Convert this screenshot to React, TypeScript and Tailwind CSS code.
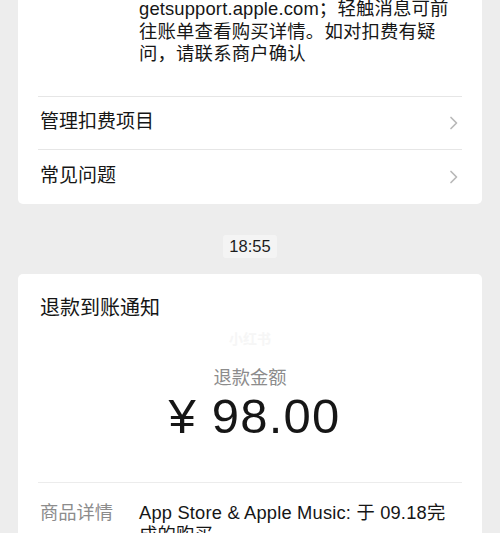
import React from 'react';

const font = { fontFamily: '"Liberation Sans", "Noto Sans CJK SC", sans-serif' };

const Chevron = () => (
  <svg width="10" height="16" viewBox="0 0 10 16" className="shrink-0">
    <path d="M2 2.5 L7.5 8 L2 13.5" fill="none" stroke="#b9b9b9" strokeWidth="1.7" strokeLinecap="round" strokeLinejoin="round" />
  </svg>
);

export default function App() {
  return (
    <div className="w-[500px] h-[533px] overflow-hidden bg-[#ededed] text-[#161616]" style={font}>
      <div className="flex flex-col px-[18px]">
        {/* Subscription card (scrolled) */}
        <div className="-mt-[2px] bg-white rounded-b-[5px] px-5">
          <div className="grid grid-cols-[101px_1fr] pb-[30px]">
            <div />
            <p className="text-[18.4px] leading-[22.5px] tracking-[0.15px]">
              getsupport.apple.com；轻触消息可前往账单查看购买详情。如对扣费有疑问，请联系商户确认
            </p>
          </div>
          <div className="border-t border-[#e6e6e6] h-[53px] flex items-center justify-between pl-[2px] pr-[3px]">
            <span className="text-[19px]">管理扣费项目</span>
            <Chevron />
          </div>
          <div className="border-t border-[#e6e6e6] h-[55px] flex items-center justify-between pl-[2px] pr-[3px]">
            <span className="text-[19px]">常见问题</span>
            <Chevron />
          </div>
        </div>

        {/* Time stamp */}
        <div className="flex justify-center pt-[31px] pb-[16px]">
          <span className="bg-[#f4f4f4] rounded-[3px] px-[6px] h-[23px] flex items-center text-[16.5px] text-[#1c1c1c]">18:55</span>
        </div>

        {/* Refund card */}
        <div className="bg-white rounded-[5px] px-5">
          <div className="pt-[22px] pl-[2px] text-[20px] leading-[24px]">退款到账通知</div>
          <div className="flex justify-center pt-[12px] text-[14px] leading-[14px] text-[#f6f6f6] font-bold">小红书</div>
          <div className="flex flex-col items-center pt-[21px]">
            <span className="text-[18.3px] leading-[22px] text-[#8c8c8c]">退款金额</span>
            <span className="text-[49px] leading-[56px] -mt-[1px] pl-[9px] tracking-[1.2px]">¥ 98.00</span>
          </div>
          <div className="mt-[38px] border-t border-[#ececec]" />
          <div className="grid grid-cols-[101px_1fr] pt-[19px]">
            <span className="pl-[2px] text-[18.3px] leading-[22.5px] text-[#8c8c8c]">商品详情</span>
            <p className="text-[18.3px] leading-[22.5px] tracking-[0.2px] pr-[12px]">App Store &amp; Apple Music: 于 09.18完成的购买</p>
          </div>
        </div>
      </div>
    </div>
  );
}
